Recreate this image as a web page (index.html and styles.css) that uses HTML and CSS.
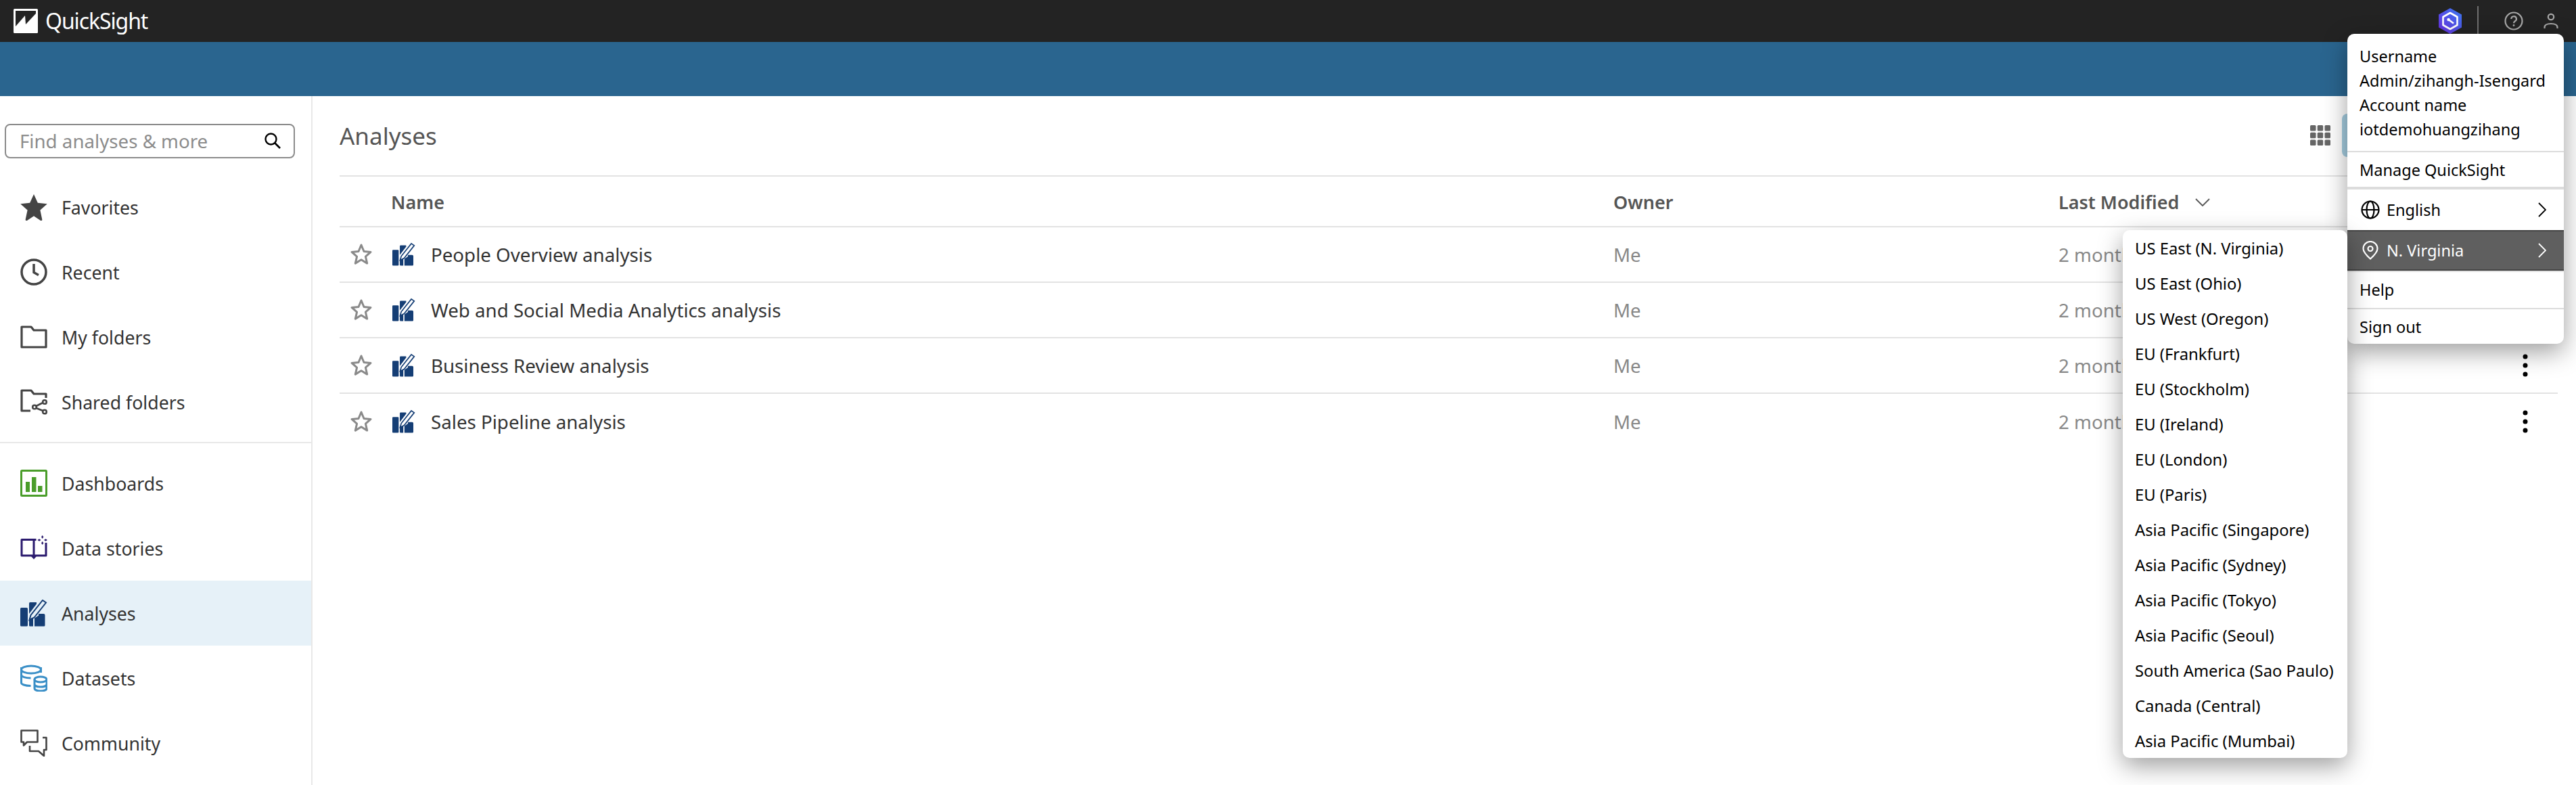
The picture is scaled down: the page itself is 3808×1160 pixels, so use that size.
FILE: index.html
```html
<!DOCTYPE html>
<html lang="en">
<head>
<meta charset="utf-8">
<title>QuickSight</title>
<link rel="stylesheet" href="styles.css">
</head>
<body>
<svg class="defs" width="0" height="0">
  <defs>
    <symbol id="i-analysis" viewBox="0 0 40 40">
      <rect x="0" y="12" width="11" height="27.500" rx="1.500" fill="#153e75"/>
      <path d="M13 5.500a1.500 1.500 0 0 1 1.500-1.500H24v2.500L13 21Z" fill="#153e75"/>
      <path d="M13 27l2 2 4-1.500V39.500h-4.500a1.500 1.500 0 0 1-1.500-1.500Z" fill="#153e75"/>
      <path d="M21 27.500l6-4V21h7.500a2 2 0 0 1 2 2v15a1.500 1.500 0 0 1-1.500 1.500H21Z" fill="#153e75"/>
      <path d="M13.500 30l2-7L33 1l5 3.500L20.500 26.500Z" fill="none" stroke="#153e75" stroke-width="2"/>
    </symbol>
    <symbol id="i-star-o" viewBox="0 0 34 34">
      <path d="M17 3l4 9.500 10 .9-7.600 6.700 2.300 10L17 24.800 8.300 30.100l2.300-10L3 13.400l10-.9Z" fill="none" stroke="#8a8a8a" stroke-width="3" stroke-linejoin="round"/>
    </symbol>
    <symbol id="i-kebab" viewBox="0 0 10 34">
      <circle cx="5" cy="4" r="3.500"/><circle cx="5" cy="17" r="3.500"/><circle cx="5" cy="30" r="3.500"/>
    </symbol>
  </defs>
</svg>
<div class="app">
  <header class="topbar">
    <div class="brand">
      <svg class="logo" viewBox="0 0 36 36"><rect width="36" height="36" rx="1.500" fill="#fff"/><path d="M3 3H33V7L18 23 17 10 3 26Z" fill="#232323"/></svg>
      <span class="brand-name">QuickSight</span>
    </div>
    <div class="top-icons">
      <svg class="hex" viewBox="0 0 36 38"><defs><linearGradient id="hexg" x1="1" y1="0" x2="0" y2="1"><stop offset="0" stop-color="#3a7bf0"/><stop offset="1" stop-color="#6a2be0"/></linearGradient></defs><path d="M18 0l17 9.500v19L18 38 1 28.500v-19Z" fill="url(#hexg)"/><path d="M18 7l10.500 6v12L18 31 7.500 25V13Z" fill="none" stroke="#fff" stroke-width="2.600" stroke-linejoin="round"/><path d="M15 16.500l8 6" stroke="#fff" stroke-width="2.600"/><circle cx="15.500" cy="17" r="2.200" fill="#fff"/></svg>
      <span class="top-sep"></span>
      <svg class="help" viewBox="0 0 28 28"><circle cx="14" cy="14" r="12.500" fill="none" stroke="#a8a8a8" stroke-width="2.200"/><path d="M10.300 11a3.800 3.800 0 1 1 5.600 3.300c-1.300.8-1.900 1.400-1.900 2.900" fill="none" stroke="#a8a8a8" stroke-width="2.200"/><circle cx="14" cy="20.500" r="1.400" fill="#a8a8a8"/></svg>
      <svg class="user" viewBox="0 0 22 24"><circle cx="11" cy="6" r="4.200" fill="none" stroke="#a8a8a8" stroke-width="2.200"/><path d="M1.500 23v-1.500c0-3.500 3-5.500 9.500-5.500s9.500 2 9.500 5.500V23" fill="none" stroke="#a8a8a8" stroke-width="2.200"/></svg>
    </div>
  </header>
  <div class="bluebar"></div>
  <div class="body">
    <aside class="sidebar">
      <div class="search">
        <span class="search-text">Find analyses &amp; more</span>
        <svg class="search-icon" viewBox="0 0 26 26"><circle cx="10.500" cy="10.500" r="8" fill="none" stroke="#000" stroke-width="2.400"/><path d="M16 16l8 8" stroke="#000" stroke-width="2.600"/></svg>
      </div>
      <nav class="nav nav-top">
        <a class="nav-item"><svg class="nav-icon" viewBox="0 0 40 40"><path d="M20 1l5.800 12.800 14 1.500-10.400 9.300 2.900 13.700a1.500 1.500 0 0 1-2.200 1.600L20 33.200 9.900 39.900a1.500 1.500 0 0 1-2.200-1.600l2.900-13.700L.2 15.300l14-1.500Z" fill="#444"/></svg><span>Favorites</span></a>
        <a class="nav-item"><svg class="nav-icon" viewBox="0 0 40 40"><circle cx="20" cy="20" r="18" fill="none" stroke="#444" stroke-width="3.500"/><path d="M20 8v12.500l7 4" fill="none" stroke="#444" stroke-width="3.500"/></svg><span>Recent</span></a>
        <a class="nav-item"><svg class="nav-icon" viewBox="0 0 40 40"><path d="M2 35V5h14l4 5h18v25Z" fill="none" stroke="#444" stroke-width="3.200" stroke-linejoin="round"/></svg><span>My folders</span></a>
        <a class="nav-item"><svg class="nav-icon" viewBox="0 0 40 40"><path d="M15 33H2V3h14l4 5h18v6" fill="none" stroke="#444" stroke-width="3.200" stroke-linejoin="round"/><circle cx="36" cy="20" r="2.800" fill="none" stroke="#444" stroke-width="2.600"/><circle cx="36" cy="34.500" r="2.800" fill="none" stroke="#444" stroke-width="2.600"/><circle cx="21" cy="27.500" r="2.800" fill="none" stroke="#444" stroke-width="2.600"/><path d="M23.500 26l10-5M23.500 29l10 4" stroke="#444" stroke-width="2.600"/></svg><span>Shared folders</span></a>
      </nav>
      <nav class="nav nav-bottom">
        <a class="nav-item"><svg class="nav-icon" viewBox="0 0 40 40"><rect x="1.500" y="1.500" width="37" height="37" rx="1" fill="none" stroke="#4a9d2a" stroke-width="3"/><path d="M8 18h6v15H8ZM17 11h6.500v22H17ZM26 24h6.500v9H26Z" fill="#4a9d2a"/></svg><span>Dashboards</span></a>
        <a class="nav-item"><svg class="nav-icon" viewBox="0 0 40 40"><path d="M23.500 7.500H20V31M20 7.500H2V31h36V12" fill="none" stroke="#2a1a6e" stroke-width="3" stroke-linejoin="round"/><path d="M16 32h8l-4 4.500Z" fill="#2a1a6e"/><path d="M32.700 1l1.700 2.500-1.700 2.500-1.700-2.500ZM32.700 10l1.700 2.500-1.700 2.500-1.700-2.500ZM25.500 8l2.500-1.700L30.500 8l-2.500 1.700ZM35 8l2.500-1.700L40 8l-2.500 1.700Z" fill="#2a1a6e"/></svg><span>Data stories</span></a>
        <a class="nav-item is-active"><svg class="nav-icon"><use href="#i-analysis"/></svg><span>Analyses</span></a>
        <a class="nav-item"><svg class="nav-icon" viewBox="0 0 40 40"><ellipse cx="16" cy="7.500" rx="14.500" ry="5.500" fill="none" stroke="#3a8fc7" stroke-width="3"/><path d="M30.500 8v8M1.500 8v23c0 2 5 4.500 14 4.500M1.500 19c0 3 6 5 14 5" fill="none" stroke="#3a8fc7" stroke-width="3" transform="translate(0 -4)"/><ellipse cx="30" cy="22" rx="9" ry="4" fill="none" stroke="#3a8fc7" stroke-width="3"/><path d="M21 22v13c0 2.500 4 4 9 4s9-1.500 9-4V22M21 29c0 2.500 4 4 9 4s9-1.500 9-4" fill="none" stroke="#3a8fc7" stroke-width="3"/></svg><span>Datasets</span></a>
        <a class="nav-item"><svg class="nav-icon" viewBox="0 0 40 40"><path d="M1.500 1.500h24v17H10l-5 5v-5H1.500Z" fill="none" stroke="#444" stroke-width="2.600" stroke-linejoin="round"/><path d="M33 12h5.500v18H35v9l-8-7H14v-8" fill="none" stroke="#444" stroke-width="2.600" stroke-linejoin="round"/></svg><span>Community</span></a>
      </nav>
    </aside>
    <main class="main">
      <div class="titlebar">
        <h1 class="title">Analyses</h1>
        <div class="title-tools">
          <svg class="grid-icon" viewBox="0 0 30 30"><g fill="#666"><rect x="0" y="0" width="8.500" height="8.500" rx="1.500"/><rect x="10.700" y="0" width="8.500" height="8.500" rx="1.500"/><rect x="21.500" y="0" width="8.500" height="8.500" rx="1.500"/><rect x="0" y="10.700" width="8.500" height="8.500" rx="1.500"/><rect x="10.700" y="10.700" width="8.500" height="8.500" rx="1.500"/><rect x="21.500" y="10.700" width="8.500" height="8.500" rx="1.500"/><rect x="0" y="21.500" width="8.500" height="8.500" rx="1.500"/><rect x="10.700" y="21.500" width="8.500" height="8.500" rx="1.500"/><rect x="21.500" y="21.500" width="8.500" height="8.500" rx="1.500"/></g></svg>
          <span class="list-toggle"></span>
        </div>
      </div>
      <div class="table">
        <div class="row row-head">
          <span class="cell-star"></span>
          <span class="cell-name">Name</span>
          <span class="cell-owner">Owner</span>
          <span class="cell-date">Last Modified <svg class="sort" viewBox="0 0 22 12"><path d="M1 1l10 10L21 1" fill="none" stroke="#555" stroke-width="1.800"/></svg></span>
          <span class="cell-menu"></span>
        </div>
        <div class="row">
          <span class="cell-star"><svg class="star"><use href="#i-star-o"/></svg></span>
          <span class="cell-name"><svg class="row-icon"><use href="#i-analysis"/></svg>People Overview analysis</span>
          <span class="cell-owner">Me</span>
          <span class="cell-date">2 months ago</span>
          <span class="cell-menu"><svg class="kebab"><use href="#i-kebab"/></svg></span>
        </div>
        <div class="row">
          <span class="cell-star"><svg class="star"><use href="#i-star-o"/></svg></span>
          <span class="cell-name"><svg class="row-icon"><use href="#i-analysis"/></svg>Web and Social Media Analytics analysis</span>
          <span class="cell-owner">Me</span>
          <span class="cell-date">2 months ago</span>
          <span class="cell-menu"><svg class="kebab"><use href="#i-kebab"/></svg></span>
        </div>
        <div class="row">
          <span class="cell-star"><svg class="star"><use href="#i-star-o"/></svg></span>
          <span class="cell-name"><svg class="row-icon"><use href="#i-analysis"/></svg>Business Review analysis</span>
          <span class="cell-owner">Me</span>
          <span class="cell-date">2 months ago</span>
          <span class="cell-menu"><svg class="kebab"><use href="#i-kebab"/></svg></span>
        </div>
        <div class="row row-last">
          <span class="cell-star"><svg class="star"><use href="#i-star-o"/></svg></span>
          <span class="cell-name"><svg class="row-icon"><use href="#i-analysis"/></svg>Sales Pipeline analysis</span>
          <span class="cell-owner">Me</span>
          <span class="cell-date">2 months ago</span>
          <span class="cell-menu"><svg class="kebab"><use href="#i-kebab"/></svg></span>
        </div>
      </div>
    </main>
  </div>
  <div class="user-menu">
    <div class="um-info">
      <div>Username</div>
      <div>Admin/zihangh-Isengard</div>
      <div>Account name</div>
      <div>iotdemohuangzihang</div>
    </div>
    <div class="um-item um-manage">Manage QuickSight</div>
    <div class="um-item um-sub">
      <svg class="um-icon" viewBox="0 0 28 28"><g fill="none" stroke="#000" stroke-width="2.200"><circle cx="14" cy="14" r="12.500"/><ellipse cx="14" cy="14" rx="5.500" ry="12.500"/><path d="M1.500 14h25"/></g></svg>
      <span class="um-label">English</span>
      <svg class="um-chev" viewBox="0 0 12 22"><path d="M1 1l10 10L1 21" fill="none" stroke="currentColor" stroke-width="1.800"/></svg>
    </div>
    <div class="um-item um-sub um-selected">
      <svg class="um-icon" viewBox="0 0 28 28"><g fill="none" stroke="#fff" stroke-width="2.200"><path d="M14 26.500C9 22 3.500 16.500 3.500 11.500a10.500 10.500 0 0 1 21 0C24.500 16.500 19 22 14 26.500Z"/><circle cx="14" cy="11.500" r="3.500"/></g></svg>
      <span class="um-label">N. Virginia</span>
      <svg class="um-chev" viewBox="0 0 12 22"><path d="M1 1l10 10L1 21" fill="none" stroke="currentColor" stroke-width="1.800"/></svg>
    </div>
    <div class="um-item um-help">Help</div>
    <div class="um-item um-out">Sign out</div>
  </div>
  <ul class="region-menu">
    <li>US East (N. Virginia)</li>
    <li>US East (Ohio)</li>
    <li>US West (Oregon)</li>
    <li>EU (Frankfurt)</li>
    <li>EU (Stockholm)</li>
    <li>EU (Ireland)</li>
    <li>EU (London)</li>
    <li>EU (Paris)</li>
    <li>Asia Pacific (Singapore)</li>
    <li>Asia Pacific (Sydney)</li>
    <li>Asia Pacific (Tokyo)</li>
    <li>Asia Pacific (Seoul)</li>
    <li>South America (Sao Paulo)</li>
    <li>Canada (Central)</li>
    <li>Asia Pacific (Mumbai)</li>
  </ul>
</div>
</body>
</html>
```
FILE: styles.css
```css
* { box-sizing: border-box; }
html, body { margin: 0; padding: 0; height: 100%; background: #fff; }
body { font-family: "Noto Sans", "Liberation Sans", sans-serif; color: #232323; overflow: hidden; }
.defs { position: absolute; }
.app { position: relative; width: 3808px; height: 1160px; overflow: hidden; display: flex; flex-direction: column; }

.topbar { height: 62px; flex: none; background: #232323; display: flex; align-items: center; justify-content: space-between; padding: 0 26px 0 20px; }
.brand { display: flex; align-items: center; gap: 11px; }
.logo { width: 36px; height: 36px; display: block; }
.brand-name { color: #fff; font-size: 32px; letter-spacing: -1.1px; line-height: 1; }
.top-icons { display: flex; align-items: center; }
.hex { width: 36px; height: 38px; }
.top-sep { width: 2px; height: 44px; background: #6f6f6f; margin: 0 38px 0 22px; }
.help { width: 28px; height: 28px; }
.user { width: 22px; height: 24px; margin-left: 30px; }

.bluebar { height: 80px; flex: none; background: #2a658f; }
.body { flex: 1; display: flex; min-height: 0; }

.sidebar { width: 462px; flex: none; border-right: 2px solid #e8e8e8; padding-top: 41px; }
.search { margin-left: 7px; width: 429px; height: 51px; border: 2px solid #8b8b8b; border-radius: 8px; display: flex; align-items: center; justify-content: space-between; padding: 0 18px 2px 20px; }
.search-text { font-size: 27.7px; color: #8c8c8c; white-space: nowrap; }
.search-icon { width: 26px; height: 26px; }
.nav { display: flex; flex-direction: column; }
.nav-top { padding: 24px 0 11px; border-bottom: 2px solid #e8e8e8; }
.nav-bottom { padding-top: 11px; }
.nav-item { height: 96px; display: flex; align-items: center; gap: 21px; padding-left: 30px; font-size: 26.7px; color: #333; }
.nav-item.is-active { background: #e6f1f8; }
.nav-icon { width: 40px; height: 40px; flex: none; }

.main { flex: 1; padding: 0 27px 0 40px; min-width: 0; }
.titlebar { height: 119px; padding-bottom: 1px; display: flex; align-items: center; justify-content: space-between; border-bottom: 2px solid #e3e3e3; }
.title { margin: 0; font-size: 35px; font-weight: 400; color: #555; }
.title-tools { display: flex; align-items: center; margin-right: 259px; gap: 17px; }
.grid-icon { width: 30px; height: 30px; }
.list-toggle { width: 60px; height: 64px; border-radius: 8px; background: #a5cde0; }

.row { height: 82px; display: flex; align-items: center; border-bottom: 2px solid #e3e3e3; font-size: 27.7px; }
.row-head { height: 75px; padding-top: 2px; font-size: 27px; font-weight: 600; color: #555; }
.row-last { border-bottom: 0; }
.cell-star { width: 76px; flex: none; display: flex; padding-left: 15px; }
.star { width: 34px; height: 34px; }
.cell-name { width: 1807px; flex: none; display: flex; align-items: center; gap: 23px; color: #333; }
.row-head .cell-name { color: #555; }
.row-icon { width: 34px; height: 36px; flex: none; margin-left: 2px; }
.cell-owner { width: 658px; flex: none; color: #888; }
.row-head .cell-owner { color: #555; }
.cell-date { flex: 1; color: #888; display: flex; align-items: center; gap: 16px; white-space: pre; }
.row-head .cell-date { color: #555; }
.sort { width: 22px; height: 12px; }
.cell-menu { width: 53px; flex: none; display: flex; }
.kebab { width: 10px; height: 34px; fill: #000; }

.user-menu { position: absolute; left: 3470px; top: 50px; width: 320px; height: 458px; background: #fff; border-radius: 10px; box-shadow: 0 12px 36px rgba(0,0,0,.38); font-size: 23.5px; color: #000; overflow: hidden; display: flex; flex-direction: column; }
.um-info { height: 175px; padding-top: 15px; padding-left: 18px; line-height: 36px; border-bottom: 2px solid #dcdcdc; }
.um-item { display: flex; align-items: center; padding-left: 18px; }
.um-manage { height: 55px; flex: none; border-bottom: 4px solid #dcdcdc; }
.um-sub { height: 60px; flex: none; position: relative; }
.um-icon { width: 28px; height: 28px; margin-right: 10px; margin-left: 2px; flex: none; }
.um-label { flex: 1; }
.um-chev { width: 12px; height: 22px; margin-right: 26px; }
.um-selected { background: #5f5f5f; border: 2px solid #444; border-left-width: 0; border-right-width: 0; color: #fff; box-shadow: 0 2px 0 #e2e2e2; }
.um-help { height: 57px; flex: none; border-bottom: 2px solid #dcdcdc; }
.um-out { flex: 1; }

.region-menu { position: absolute; left: 3138px; top: 340px; width: 332px; height: 780px; margin: 0; padding: 1px 0 0 18px; list-style: none; background: #fff; border-radius: 10px; box-shadow: 0 12px 36px rgba(0,0,0,.38); font-size: 23.8px; color: #000; }
.region-menu li { height: 52px; line-height: 52px; white-space: nowrap; }
```
